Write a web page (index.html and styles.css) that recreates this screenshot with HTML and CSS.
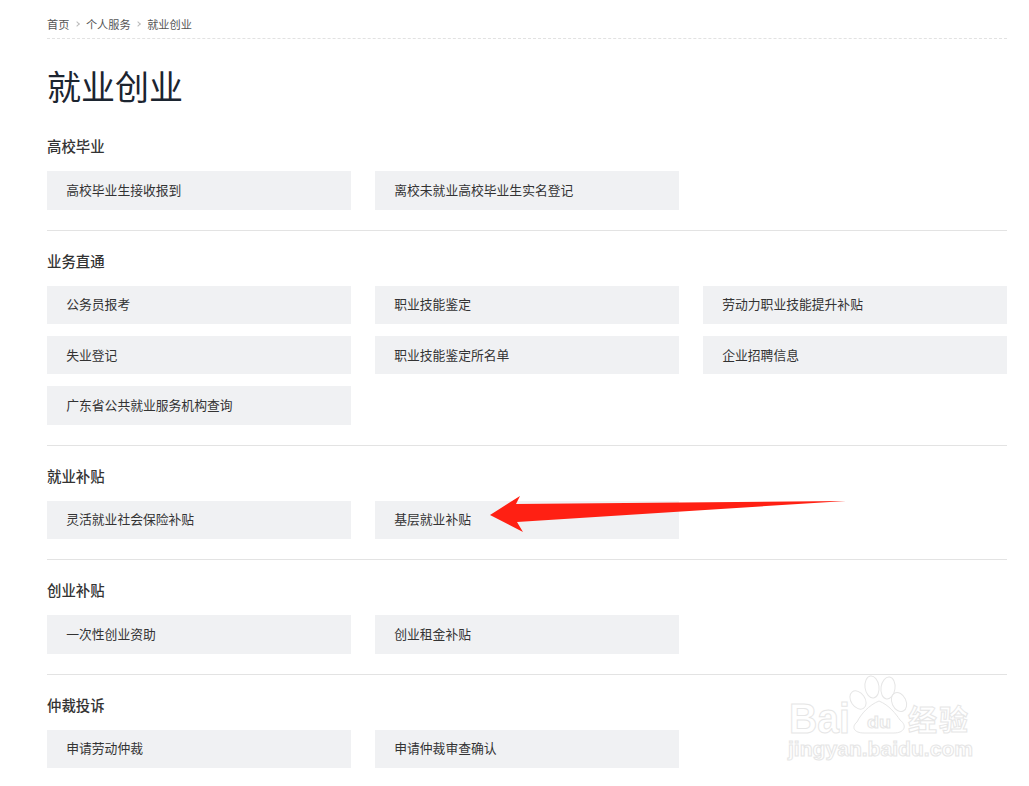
FILE: index.html
```html
<!DOCTYPE html>
<html lang="zh-CN">
  <head>
    <meta charset="utf-8">
    <link rel="stylesheet" href="styles.css">
    <title>就业创业</title>
  </head>
  <body>
    <div class="container">
      <div class="crumbs">
        <a href="#">首页</a><span class="sep"></span>
        <a href="#">个人服务</a><span class="sep"></span>
        <a href="#">就业创业</a>
      </div>
      <h1 class="page-title">就业创业</h1>

      <section class="group">
        <h2 class="group-title">高校毕业</h2>
        <div class="links">
          <a class="link" href="#">高校毕业生接收报到</a>
          <a class="link" href="#">离校未就业高校毕业生实名登记</a>
        </div>
      </section>

      <section class="group">
        <h2 class="group-title">业务直通</h2>
        <div class="links">
          <a class="link" href="#">公务员报考</a>
          <a class="link" href="#">职业技能鉴定</a>
          <a class="link" href="#">劳动力职业技能提升补贴</a>
          <a class="link" href="#">失业登记</a>
          <a class="link" href="#">职业技能鉴定所名单</a>
          <a class="link" href="#">企业招聘信息</a>
          <a class="link" href="#">广东省公共就业服务机构查询</a>
        </div>
      </section>

      <section class="group">
        <h2 class="group-title">就业补贴</h2>
        <div class="links">
          <a class="link" href="#">灵活就业社会保险补贴</a>
          <a class="link" href="#">基层就业补贴</a>
        </div>
      </section>

      <section class="group">
        <h2 class="group-title">创业补贴</h2>
        <div class="links">
          <a class="link" href="#">一次性创业资助</a>
          <a class="link" href="#">创业租金补贴</a>
        </div>
      </section>

      <section class="group">
        <h2 class="group-title">仲裁投诉</h2>
        <div class="links">
          <a class="link" href="#">申请劳动仲裁</a>
          <a class="link" href="#">申请仲裁审查确认</a>
        </div>
      </section>
    </div>

    <!-- red arrow drawn on top of the screenshot -->
    <svg class="arrow" width="1029" height="786" viewBox="0 0 1029 786">
      <polygon points="490,515 520,496 516,504 846,501 517,522 523,532" fill="#ff2013" />
    </svg>

    <!-- watermark -->
    <svg class="watermark" width="200" height="100" viewBox="0 0 200 100">
      <g class="wm-lines">
        <ellipse cx="72" cy="28" rx="7" ry="10" transform="rotate(-35 72 28)" />
        <ellipse cx="86" cy="15" rx="7" ry="11" transform="rotate(-8 86 15)" />
        <ellipse cx="102" cy="16" rx="7" ry="11" transform="rotate(8 102 16)" />
        <ellipse cx="113" cy="30" rx="7" ry="10" transform="rotate(-25 113 30)" />
        <path d="M71 50 C75 42 83 33 93 29 C103 33 110 42 114 48 C122 54 118 61 108 61 L78 61 C68 61 65 55 71 50 Z" />
        <text class="wm-big" x="3" y="61" textLength="61" lengthAdjust="spacingAndGlyphs">Bai</text>
        <text class="wm-du" x="81" y="56" textLength="24" lengthAdjust="spacingAndGlyphs">du</text>
        <text class="wm-cn" x="122" y="59" textLength="60">经验</text>
        <text class="wm-url" x="2" y="84" textLength="185" lengthAdjust="spacingAndGlyphs">jingyan.baidu.com</text>
      </g>
    </svg>
  </body>
</html>
```

FILE: styles.css
```css
* {
  box-sizing: border-box;
}
body {
  margin: 0;
  background: #fff;
  color: #333;
  font-family: "Noto Sans CJK SC", "Liberation Sans", sans-serif;
}
a {
  color: inherit;
  text-decoration: none;
}
.container {
  width: 960px;
  margin-left: 47px;
}

.crumbs {
  height: 39px;
  padding-top: 15px;
  display: flex;
  align-items: flex-start;
  font-size: 11.2px;
  line-height: 18px;
  color: #555;
  border-bottom: 1px dashed #e2e2e2;
}
.sep {
  width: 4px;
  height: 4px;
  margin: 7px 7px 0 5.5px;
  border-top: 1px solid #bbb;
  border-right: 1px solid #bbb;
  transform: rotate(45deg);
}

.page-title {
  margin: 23px 0 27.2px;
  font-size: 34px;
  line-height: 48px;
  font-weight: 400;
  color: #1c2530;
}

.group {
  padding-bottom: 20px;
  margin-bottom: 21px;
  border-bottom: 1px solid #e3e3e3;
}
.group:last-child {
  border-bottom: none;
}
.group-title {
  margin: 0 0 14px;
  padding-bottom: 2px;
  height: 20px;
  font-size: 14.4px;
  line-height: 18px;
  font-weight: 500;
  color: #333;
}

.links {
  display: grid;
  grid-template-columns: repeat(3, 304px);
  column-gap: 24px;
  row-gap: 12px;
}
.link {
  height: 38.4px;
  padding: 0 0 2px 19.2px;
  display: flex;
  align-items: center;
  font-size: 12.8px;
  background: #f0f1f3;
  color: #333;
}

.arrow {
  position: absolute;
  left: 0;
  top: 0;
  pointer-events: none;
}
.watermark {
  position: absolute;
  left: 786px;
  top: 672px;
  pointer-events: none;
}
.wm-lines * {
  fill: #fff;
  stroke: #e6e6e6;
  stroke-width: 1;
}
.wm-big {
  font: 700 42px "Liberation Sans", sans-serif;
}
.wm-du {
  font: 700 17px "Liberation Sans", sans-serif;
}
.wm-cn {
  font: 700 29px "Noto Sans CJK SC", sans-serif;
}
.wm-url {
  font: 700 20px "Liberation Sans", sans-serif;
}
```
